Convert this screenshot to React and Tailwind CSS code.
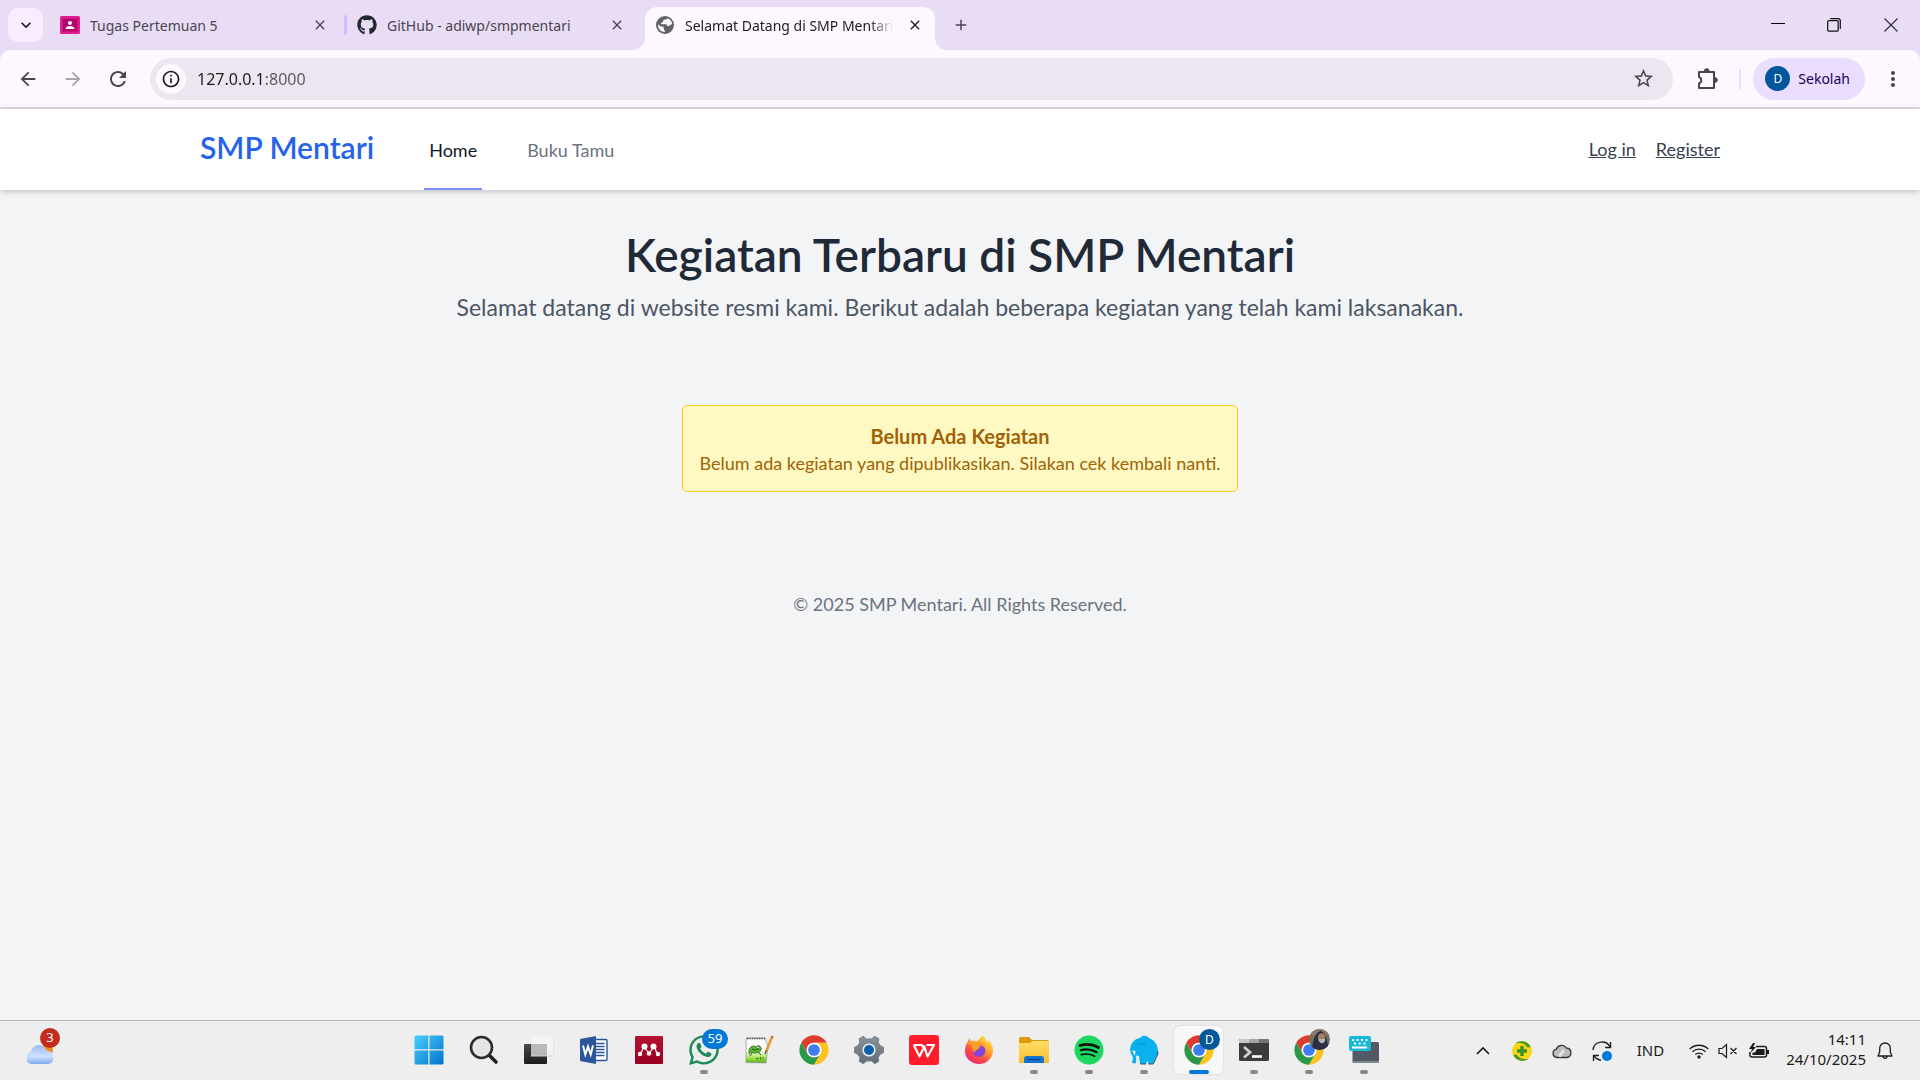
import React from "react";
import { FaGithub, FaWhatsapp } from "react-icons/fa";
import { MdStarBorder, MdRefresh, MdArrowBack, MdArrowForward, MdInfoOutline, MdMoreVert, MdClose, MdAdd, MdKeyboardArrowDown } from "react-icons/md";

function ChromeMark() {
  return (
    <svg viewBox="0 0 48 48" className="size-8">
      <path d="M43.05 13A22 22 0 0 0 4.95 13L14.47 29.5A11 11 0 0 1 24 13Z" fill="#df3c2f" />
      <path d="M43.05 13A22 22 0 0 1 24 46L33.53 29.5A11 11 0 0 0 24 13Z" fill="#fcc31e" />
      <path d="M4.95 13A22 22 0 0 0 24 46L33.53 29.5A11 11 0 0 1 14.47 29.5Z" fill="#2b9847" />
      <circle cx="24" cy="24" r="11" fill="#fff" />
      <circle cx="24" cy="24" r="8.8" fill="#3f7ef0" />
    </svg>
  );
}

function StartMark() {
  return (
    <svg viewBox="0 0 30 30" className="size-[30px]">
      <defs>
        <linearGradient id="win" x1="0" y1="0" x2="1" y2="1">
          <stop offset="0" stopColor="#48d0fb" />
          <stop offset="1" stopColor="#0171d0" />
        </linearGradient>
      </defs>
      <path d="M2 .5h12.3v13.8H.5V2A1.5 1.5 0 0 1 2 .5ZM15.5 .5H28A1.5 1.5 0 0 1 29.5 2v12.3h-14ZM.5 15.5h13.8v14H2A1.5 1.5 0 0 1 .5 28ZM15.5 15.5h14V28a1.5 1.5 0 0 1-1.5 1.5H15.5Z" fill="url(#win)" />
    </svg>
  );
}

function SearchMark() {
  return (
    <svg viewBox="0 0 30 30" className="size-[30px]">
      <path d="M20 20l7 7" stroke="#222" strokeWidth="3.6" strokeLinecap="round" />
      <circle cx="12.5" cy="12.5" r="10.5" fill="#e3e5e7" stroke="#2c2c2c" strokeWidth="2.6" />
    </svg>
  );
}

function TaskViewMark() {
  return (
    <svg viewBox="0 0 30 30" className="size-[30px]">
      <defs>
        <linearGradient id="tv" x1="0" y1="0" x2="0" y2="1">
          <stop offset="0" stopColor="#4a4a48" />
          <stop offset="1" stopColor="#1c1c1c" />
        </linearGradient>
      </defs>
      <rect x="0" y="9" width="23" height="20" rx="1" fill="url(#tv)" />
      <rect x="7" y="1" width="23" height="20" rx="1" fill="#f4f4f4" />
      <rect x="7" y="9" width="16" height="12" fill="#b9b9b9" />
      <path d="M7 21h23V2" fill="none" stroke="#d2d2d2" />
    </svg>
  );
}

function WordMark() {
  return (
    <svg viewBox="0 0 30 30" className="size-[30px]">
      <rect x="12" y="4.5" width="16" height="21" rx="1" fill="#fff" stroke="#2b579a" strokeWidth="1.4" />
      <path d="M17 8.5h8.500M17 11.5h8.500M17 14.5h8.500M17 17.5h8.500M17 20.5h8.500" stroke="#2b579a" strokeWidth="1.3" />
      <path d="M1 4L17 1v28L1 26Z" fill="#2b579a" />
      <path d="M4 10.500l2.300 9L9 11.500l2.700 8 2.300-9" fill="none" stroke="#fff" strokeWidth="2" />
    </svg>
  );
}

function MendeleyMark() {
  return (
    <svg viewBox="0 0 30 30" className="size-[30px]">
      <defs>
        <linearGradient id="md" x1="0" y1="0" x2="0" y2="1">
          <stop offset="0" stopColor="#b51232" />
          <stop offset="1" stopColor="#98001f" />
        </linearGradient>
      </defs>
      <rect x="1" y="1" width="28" height="28" rx="1" fill="url(#md)" />
      <path d="M6 19c1.800-1.500 2.500-3 2.800-6M24 19c-1.800-1.500-2.500-3-2.800-6M11 13l4 5.500 4-5.500" fill="none" stroke="#fff" strokeWidth="1.2" />
      <circle cx="10.5" cy="11.5" r="3" fill="#fff" />
      <circle cx="19.5" cy="11.5" r="3" fill="#fff" />
      <circle cx="15" cy="18.5" r="2.2" fill="#fff" />
      <circle cx="6" cy="19" r="2.2" fill="#fff" />
      <circle cx="24" cy="19" r="2.2" fill="#fff" />
    </svg>
  );
}

function NotepadMark() {
  return (
    <svg viewBox="0 0 30 30" className="size-[30px]">
      <defs>
        <linearGradient id="np" x1="0" y1="0" x2="0" y2="1">
          <stop offset="0.5" stopColor="#fbfbfb" />
          <stop offset="0.8" stopColor="#a5e34a" />
          <stop offset="1" stopColor="#4fae18" />
        </linearGradient>
      </defs>
      <path d="M2 3h19l3 8-2 17-20-.5Z" fill="url(#np)" stroke="#9a9a9a" strokeWidth=".8" />
      <path d="M3 3.500h18" stroke="#444" strokeWidth="1.5" strokeDasharray="1.4 1" />
      <path d="M5 15c1-4 5-5 7-3 3-3 6 0 5 3-1 3-7 4-10 2l-2 2Z" fill="#54b924" stroke="#3d6b2c" strokeWidth=".8" />
      <path d="M8 14l3 1 4-1M8 18l-2 3M14 17l3 3" fill="none" stroke="#2f5a26" />
      <circle cx="14" cy="12.5" r="1.3" fill="#fff" stroke="#222" strokeWidth=".5" />
      <path d="M12 23.500h3M16.500 22v2.500M19 22v2.500" stroke="#31721b" />
      <path d="M28 2L22 17" stroke="#e79a2b" strokeWidth="2.6" />
      <path d="M28.700 1l-1 2" stroke="#d66a5a" strokeWidth="2.6" />
      <path d="M22.300 15.500L21 19" stroke="#555" strokeWidth="1.3" />
    </svg>
  );
}

function SettingsMark() {
  return (
    <svg viewBox="0 0 30 30" className="size-[30px]">
      <defs>
        <linearGradient id="gr" x1="0" y1="0" x2="0" y2="1">
          <stop offset="0" stopColor="#8b949c" />
          <stop offset="1" stopColor="#626b74" />
        </linearGradient>
      </defs>
      <path d="M12.3 4L9.500 1.200 5.200 3.700 5.800 7.500 4 10.500.4 12.500v5L4 19.500l1.800 3L5.200 26.300l4.300 2.500L12.300 26h5.400l2.800 2.800 4.300-2.500-.6-3.800 1.800-3 3.600-2v-5l-3.600-2-1.800-3 .6-3.800-4.300-2.500L17.700 4Z" fill="url(#gr)" stroke="#77808a" strokeLinejoin="round" />
      <circle cx="15" cy="15" r="6.6" fill="#e8eef3" />
      <circle cx="15" cy="15" r="5" fill="#0f5cad" />
    </svg>
  );
}

function WpsMark() {
  return (
    <svg viewBox="0 0 30 30" className="size-[30px]">
      <rect width="30" height="30" rx="3" fill="#ff1c2b" />
      <path d="M4.500 10H13L15.500 15M5 10.500L10.500 21.500 15.300 11.500 18.500 21.500 25 10h-7.500" fill="none" stroke="#fff" strokeWidth="2.2" strokeLinejoin="round" />
    </svg>
  );
}

function FirefoxMark() {
  return (
    <svg viewBox="0 0 30 30" className="size-[30px]">
      <defs>
        <linearGradient id="ff" x1="0.9" y1="0" x2="0.2" y2="1">
          <stop offset="0" stopColor="#fff04a" />
          <stop offset="0.4" stopColor="#ffa22b" />
          <stop offset="0.7" stopColor="#ff4a45" />
          <stop offset="1" stopColor="#e8207f" />
        </linearGradient>
      </defs>
      <path d="M18 .5c3 2 4.500 4.500 5 7 1-.8.8-2 .8-2.800C27 7 29 11 29 15.500 29 23 23 29 15.200 29S1 23.500 1 16c0-4 1-7 3-9.500C4.500 5 5 4 6 3c0 1.500.3 2.500 1 3.200 2-.6 4-.4 5 .3C14 6 16 3.500 18 .5Z" fill="url(#ff)" />
      <circle cx="15" cy="15.5" r="6.4" fill="#8443dd" />
      <path d="M10 9c4-3 11-1 11.500 5-2-3-4-3.500-6-3 1 2-1 3.500-3 4-2 .8-2 2-1 3-3-1-4-5-1.500-9Z" fill="#ff9427" />
      <path d="M4 7.500c3-2 6-1 7.500 1L15 9c-1 3-4 3-5.500 5Z" fill="#ffa12c" />
    </svg>
  );
}

function ExplorerMark() {
  return (
    <svg viewBox="0 0 30 30" className="size-[30px]">
      <defs>
        <linearGradient id="fo" x1="0" y1="0" x2="0" y2="1">
          <stop offset="0" stopColor="#ffdc6b" />
          <stop offset="1" stopColor="#f9bd2b" />
        </linearGradient>
      </defs>
      <path d="M0 3.500A1.500 1.500 0 0 1 1.500 2H10l3 3h15a2 2 0 0 1 2 2v4H0Z" fill="#dd9b0b" />
      <path d="M0 8h11l2.500-2H28a2 2 0 0 1 2 2v20H0Z" fill="url(#fo)" />
      <path d="M5 28v-4a3 3 0 0 1 3-3h14a3 3 0 0 1 3 3v4Z" fill="#1175ce" />
      <path d="M9 24.500h12" stroke="#0a4b93" strokeWidth="1.4" strokeLinecap="round" />
    </svg>
  );
}

function SpotifyMark() {
  return (
    <svg viewBox="0 0 30 30" className="size-[30px]">
      <circle cx="15" cy="15" r="14.5" fill="#1ed760" />
      <path d="M6 10.500c6-1.700 13-1.200 18.500 2" stroke="#111" strokeWidth="2.7" fill="none" strokeLinecap="round" />
      <path d="M6.700 15.300c5-1.400 11-.9 16 1.900" stroke="#111" strokeWidth="2.2" fill="none" strokeLinecap="round" />
      <path d="M7.300 19.600c4.500-1.100 9.500-.6 13.500 1.600" stroke="#111" strokeWidth="1.7" fill="none" strokeLinecap="round" />
    </svg>
  );
}

function ElephantMark() {
  return (
    <svg viewBox="0 0 30 30" className="size-[30px]">
      <path d="M15 .8c3 .2 4 1.500 6 2.700 5 2 8 7 8 13 0 4-1.500 5.500-2.500 7.500-.5 2-1.500 4-2.500 5h-4.500l-1-3.500-1.500 3.500h-6l-1-8-3-.5.3 5.500c.3 3.200-3.800 3.200-4.600.6 1.800-.6 1.300-3 .8-5.600C.3 17 .3 11 4 7 6.500 3.500 10 3.500 11.500 2.500 12.500 1.300 13.500.8 15 .8Z" fill="#0bb0ee" />
      <path d="M29 16.500c0 4-1.500 5.500-2.500 7.500-.5 2-1.500 4-2.500 5h-4.500M17 29h-5.500" fill="none" stroke="#3f4f58" />
      <path d="M8 7.500c3 2.500 6 2 8.500.5" fill="none" stroke="#0795d2" strokeWidth="1.2" />
      <path d="M3.300 15.500l3.200.5c0 2-.3 3.500-1 4.500Z" fill="#f0faff" />
      <path d="M7.500 21l.3 6" fill="none" stroke="#cfe9f5" strokeWidth="1.2" />
    </svg>
  );
}

function TerminalMark() {
  return (
    <svg viewBox="0 0 30 30" className="size-[30px]">
      <rect x="0" y="4" width="30" height="22" rx="1.5" fill="#3c3c3c" />
      <path d="M0 8V5.500A1.500 1.500 0 0 1 1.500 4H10v4Z" fill="#c9c9c9" />
      <path d="M10 4h10v4H10Z" fill="#a4a4a4" />
      <path d="M20 4h8.500A1.500 1.500 0 0 1 30 5.500V8H20Z" fill="#767676" />
      <path d="M5 12l6 5.300L5 22.500" fill="none" stroke="#d0d0d0" strokeWidth="2.8" />
      <path d="M13 21.500h10" stroke="#fff" strokeWidth="2.6" />
    </svg>
  );
}

function KeyboardMark() {
  return (
    <svg viewBox="0 0 30 30" className="size-[30px]">
      <rect x="3.5" y="7" width="26.5" height="21" rx="1.5" fill="#525b65" />
      <path d="M4 27h26" stroke="#8b949c" strokeWidth="1.6" />
      <rect x="0" y="1" width="22" height="15" rx="2" fill="#19b7d8" />
      <path d="M3 5h2M7.500 5h2M12 5h2M16.500 5h2M5 8.500h2M9.700 8.500h2M14.500 8.500h2" stroke="#fff" strokeWidth="2" />
      <path d="M3 12.500h15" stroke="#fff" strokeWidth="2" />
    </svg>
  );
}

const badge = "absolute flex items-center justify-center rounded-full text-white";

const TASKS = [
  { name: "Start", icon: <StartMark /> },
  { name: "Search", icon: <SearchMark /> },
  { name: "Task view", icon: <TaskViewMark /> },
  { name: "Word", icon: <WordMark /> },
  { name: "Mendeley", icon: <MendeleyMark /> },
  {
    name: "WhatsApp",
    icon: <FaWhatsapp className="size-[34px] text-[#1c8b58]" />,
    running: true,
    extra: <span className={`${badge} left-[23px] top-[3px] h-5 w-[26px] bg-[#0078d7] text-[13px]`}>59</span>,
  },
  { name: "Notepad++", icon: <NotepadMark /> },
  { name: "Chrome", icon: <ChromeMark /> },
  { name: "Settings", icon: <SettingsMark /> },
  { name: "WPS Office", icon: <WpsMark /> },
  { name: "Firefox", icon: <FirefoxMark /> },
  { name: "File Explorer", icon: <ExplorerMark />, running: true },
  { name: "Spotify", icon: <SpotifyMark />, running: true },
  { name: "Laragon", icon: <ElephantMark />, running: true },
  {
    name: "Chrome, Sekolah",
    icon: <ChromeMark />,
    active: true,
    extra: <span className={`${badge} left-[25px] top-[3px] size-[21px] bg-[#04579b] text-xs`}>D</span>,
  },
  { name: "Terminal", icon: <TerminalMark />, running: true },
  {
    name: "Chrome, second profile",
    icon: <ChromeMark />,
    running: true,
    extra: (
      <svg viewBox="0 0 20 20" className="absolute left-[25px] top-[3px] size-[21px]">
        <clipPath id="av"><circle cx="10" cy="10" r="10" /></clipPath>
        <g clipPath="url(#av)">
          <rect width="20" height="20" fill="#6b7358" />
          <path d="M0 0h20v6H0Z" fill="#8b7a68" />
          <path d="M3 20C3 12 6 3 11 2c5 1 6 8 8 18Z" fill="#2b2d45" />
          <ellipse cx="12" cy="8" rx="3.4" ry="4" fill="#a97f68" />
          <path d="M9 9.500h6.500c0 3-1.500 4-3.200 4S9 12 9 9.500Z" fill="#aeb4b8" />
        </g>
      </svg>
    ),
  },
  { name: "Touch keyboard", icon: <KeyboardMark />, running: true },
];

function TaskButton({ task }) {
  return (
    <button
      type="button"
      aria-label={task.name}
      className={`relative mx-[3px] mb-1.5 mt-[5px] flex w-[49px] items-center justify-center rounded-md ${task.active ? "bg-[#f8f8f8] shadow-[0_0_1px_1px_#e2e2e2]" : ""}`}
    >
      {task.icon}
      {task.extra}
      {task.active && <span className="absolute bottom-0 h-1 w-5 rounded-full bg-[#0078d7]" />}
      {task.running && <span className="absolute bottom-0 h-1 w-2 rounded-full bg-[#868686]" />}
    </button>
  );
}

function TabStrip() {
  return (
    <div className="flex h-[50px] bg-[#e9ddf5] text-[14px] text-[#49454f]">
      <button type="button" aria-label="Search tabs" className="ml-2 mt-2 flex h-[34px] w-[35px] items-center justify-center rounded-[10px] bg-[#f7edff] text-[#1d1b20]">
        <MdKeyboardArrowDown className="size-5" />
      </button>
      <div className="flex w-[301px] items-center pl-[17px]">
        <svg viewBox="0 0 20 18" className="h-[18px] w-5 shrink-0">
          <rect width="20" height="18" rx="1.5" fill="#e01e8c" />
          <rect x="2.5" y="2.5" width="15" height="13" fill="#b5066f" />
          <circle cx="10" cy="7" r="2" fill="#fff" />
          <path d="M5.500 13c0-2 2-3 4.500-3s4.500 1 4.500 3Z" fill="#fff" />
        </svg>
        <button type="button" className="ml-2.5 flex-1 truncate text-left">Tugas Pertemuan 5</button>
        <button type="button" aria-label="Close tab" className="mr-3.5 p-0.5"><MdClose className="size-4" /></button>
      </div>
      <div className="flex w-[301px] items-center">
        <span className="h-5 w-[3px] rounded-full bg-[#d3bcfd]" />
        <FaGithub className="ml-2.5 size-5 shrink-0 text-[#24292f]" />
        <button type="button" className="ml-2.5 flex-1 truncate text-left">GitHub - adiwp/smpmentari</button>
        <button type="button" aria-label="Close tab" className="mr-[18px] p-0.5"><MdClose className="size-4" /></button>
      </div>
      <div className="relative mt-[7px] flex w-[290px] items-center rounded-t-[12px] bg-[#fdf7ff] pb-[7px] text-[#1d1b20]">
        <span className="absolute -left-3 bottom-0 size-3 bg-[radial-gradient(circle_at_0_0,#e9ddf5_12px,#fdf7ff_12px)]" />
        <span className="absolute -right-3 bottom-0 size-3 bg-[radial-gradient(circle_at_100%_0,#e9ddf5_12px,#fdf7ff_12px)]" />
        <svg viewBox="0 0 18 18" className="ml-[11px] size-[18px] shrink-0">
          <circle cx="9" cy="9" r="9" fill="#5f6368" />
          <path d="M11.500 2.200c-.5 1-1.500 1.300-2.500 1.300-1.500 0-1.800.8-1.800 1.800 0 1-1 1.200-1.800 1.200-.6 0-.4 1.500.2 1.700h4.200c.9 0 1.400.9 1.400 1.900h1.600c1 0 1.400-.8 2-1.500.4-.5 1-.5 1.400-.4A7 7 0 0 0 11.500 2.200ZM2 8.200c1.500 1.500 2.500 2.300 4 2.300 1.800 0 2.200 1.200 1.700 2.200-.3.600.6 1.200 1 1.800.3.500.2 1 .2 1.600A7 7 0 0 1 2 8.200Z" fill="#fdf7ff" />
        </svg>
        <button type="button" className="ml-[11px] w-[209px] overflow-hidden whitespace-nowrap text-left [mask-image:linear-gradient(90deg,#000_88%,transparent)]">
          Selamat Datang di SMP Mentari
        </button>
        <button type="button" aria-label="Close tab" className="ml-auto mr-2.5 p-0.5"><MdClose className="size-4" /></button>
      </div>
      <button type="button" aria-label="New tab" className="ml-[15px] px-0.5"><MdAdd className="size-[18px]" /></button>
      <div className="ml-auto flex text-black">
        <button type="button" aria-label="Minimise" className="flex w-[57px] items-center justify-center">
          <svg viewBox="0 0 14 14" className="size-3.5"><path d="M0 5.500h14" stroke="#000" /></svg>
        </button>
        <button type="button" aria-label="Restore" className="flex w-[56px] items-center justify-center">
          <svg viewBox="0 0 14 14" className="size-3.5" fill="none" stroke="#111" strokeWidth="1.2">
            <rect x=".7" y="2.7" width="10.5" height="10.5" rx="1" />
            <path d="M3 .7h8a2.300 2.300 0 0 1 2.300 2.300v8" />
          </svg>
        </button>
        <button type="button" aria-label="Close" className="flex w-[58px] items-center justify-center">
          <svg viewBox="0 0 14 14" className="size-3.5"><path d="M.5 .5l13 13M13.500 .5l-13 13" stroke="#333" strokeWidth="1.2" /></svg>
        </button>
      </div>
    </div>
  );
}

function Toolbar() {
  return (
    <div className="bg-[#e9ddf5]">
      <div className="flex h-[59px] items-center rounded-t-[10px] border-b-2 border-[#e5dfe9] bg-[#fdf7ff] text-[#49454f]">
        <button type="button" aria-label="Back" className="ml-[17px]"><MdArrowBack className="size-[22px]" /></button>
        <button type="button" aria-label="Forward" className="ml-[23px] text-[#aaa5ae]"><MdArrowForward className="size-[22px]" /></button>
        <button type="button" aria-label="Reload" className="ml-[22px]"><MdRefresh className="size-6" /></button>
        <div className="ml-5 flex h-[42px] flex-1 items-center rounded-full bg-[#ece6f0] pl-1.5">
          <button type="button" aria-label="Site information" className="flex size-[30px] items-center justify-center rounded-full bg-[#fdf7ff] text-[#1d1b20]">
            <MdInfoOutline className="size-5" />
          </button>
          <input
            aria-label="Address"
            defaultValue="127.0.0.1:8000"
            className="ml-[11px] min-w-0 flex-1 bg-[linear-gradient(90deg,#1d1b20_65px,#5a5560_65px)] bg-clip-text text-[16px] text-transparent outline-none"
          />
          <button type="button" aria-label="Bookmark" className="mr-[18px]"><MdStarBorder className="size-[23px]" /></button>
        </div>
        <button type="button" aria-label="Extensions" className="ml-[22px]">
          <svg viewBox="0 0 24 24" className="size-6" fill="none" stroke="currentColor" strokeWidth="2" strokeLinejoin="round">
            <path d="M4 5h15v16H4v-4.500c3-1 3-5.500 0-6.500Z" />
            <path d="M10 4a1.700 1.700 0 0 1 3.400 0ZM20 11.300a1.700 1.700 0 0 1 0 3.400Z" fill="currentColor" />
          </svg>
        </button>
        <span className="ml-5 h-5 w-0.5 bg-[#eaddff]" />
        <button type="button" className="ml-3 flex h-[42px] items-center gap-2 rounded-full bg-[#eaddff] pl-3 pr-[15px] text-[14px] text-[#21005d]">
          <span className="flex size-[25px] items-center justify-center rounded-full bg-[#01579b] text-xs text-white">D</span>
          Sekolah
        </button>
        <button type="button" aria-label="Menu" className="ml-4 mr-[15px]"><MdMoreVert className="size-6" /></button>
      </div>
    </div>
  );
}

function SiteNav() {
  return (
    <nav className="relative bg-white shadow-[0_1px_6px_rgba(0,0,0,0.25)]">
      <div className="mx-auto flex h-[81px] max-w-[1600px] px-10">
        <a href="#home" className="flex items-center pb-1 text-[30px] font-semibold text-[#2563eb]">SMP Mentari</a>
        <a href="#home" className="ml-[50px] flex items-center border-b-2 border-[#818cf8] px-[5px] pt-1 text-[18px] text-[#111827]">Home</a>
        <a href="#buku-tamu" className="ml-10 flex items-center border-b-2 border-transparent px-[5px] pt-1 text-[18px] text-[#6b7280]">Buku Tamu</a>
        <div className="ml-auto flex items-center gap-5 text-[18px] text-[#374151] underline">
          <a href="#login">Log in</a>
          <a href="#register">Register</a>
        </div>
      </div>
    </nav>
  );
}

function Tray() {
  return (
    <div className="ml-auto flex items-center text-[#1b1b1b]">
      <button type="button" aria-label="Show hidden icons" className="mr-[22px]">
        <svg viewBox="0 0 14 10" className="h-2.5 w-3.5" fill="none" stroke="currentColor" strokeWidth="1.6"><path d="M1 8l6-6 6 6" /></svg>
      </button>
      <svg viewBox="0 0 20 20" className="mr-5 size-5">
        <circle cx="10" cy="10" r="10" fill="#fbd414" />
        <path d="M3 2.500C8-1.500 16 0 18.500 6l-3 .5C13 2 8 1 3 2.500ZM17 17.500c-5 4-13 2.500-15.500-3.500l3-.5C7 18 12 19 17 17.500Z" fill="#3a9a2c" />
        <path d="M10 5v10M5 10h10" stroke="#34942c" strokeWidth="3.4" />
      </svg>
      <svg viewBox="0 0 20 16" className="mr-5 h-4 w-5">
        <path d="M5 14.500a4.200 4.200 0 0 1-.6-8.300A5.600 5.600 0 0 1 14.500 5a4.800 4.800 0 0 1 .5 9.500Z" fill="#b9bbbd" stroke="#333" strokeWidth="1.3" />
        <path d="M7 13.500l5-6.500" stroke="#e4e4e4" strokeWidth="3" />
      </svg>
      <svg viewBox="0 0 20 20" className="mr-[25px] size-5" fill="none" stroke="#222" strokeWidth="1.4">
        <path d="M1 9A9 9 0 0 1 18 6M18.500 1v5.500H13M1.500 20v-5.500H7M2 15c2 2.500 4 4 7 4.200" />
        <circle cx="15" cy="15" r="5" fill="#0078d7" stroke="none" />
      </svg>
      <span className="mr-[25px] text-[15px]">IND</span>
      <svg viewBox="0 0 20 16" className="mr-[9px] h-4 w-5" fill="none" stroke="currentColor" strokeWidth="1.4">
        <path d="M.7 6a13.300 13.300 0 0 1 18.600 0M3.500 8.800a9.300 9.300 0 0 1 13 0M6.300 11.600a5.300 5.300 0 0 1 7.400 0" />
        <circle cx="10" cy="14" r="1.7" fill="currentColor" stroke="none" />
      </svg>
      <svg viewBox="0 0 20 16" className="mr-[11px] h-4 w-5" fill="none" stroke="currentColor" strokeWidth="1.2">
        <path d="M1 5.500h3L8.500 1.500v13L4 10.500H1ZM12.500 5l6 6M18.500 5l-6 6" />
      </svg>
      <svg viewBox="0 0 20 16" className="h-4 w-5" fill="none" stroke="currentColor" strokeWidth="1.5">
        <path d="M7 3.500h8.500a2 2 0 0 1 2 2v6.500a2 2 0 0 1-2 2H3a2 2 0 0 1-2-2V9" />
        <path d="M8 6h7.500v6H3.500V9.500H6ZM18 7h2v4h-2ZM4 0L0 6h3L1.500 10 7 4H4.200L6 0Z" fill="currentColor" stroke="none" />
      </svg>
      <div className="ml-[17px] pb-1 text-right text-[15px] leading-5">
        <div>14:11</div>
        <div>24/10/2025</div>
      </div>
      <button type="button" aria-label="Notifications" className="ml-[11px] mr-[27px]">
        <svg viewBox="0 0 16 18" className="h-[18px] w-4" fill="none" stroke="currentColor" strokeWidth="1.3" strokeLinejoin="round">
          <path d="M8 1a5.300 5.300 0 0 0-5.300 5.300V10L1 14h14l-1.700-4V6.300A5.300 5.300 0 0 0 8 1ZM6 14.300a2 2 0 0 0 4 0" />
        </svg>
      </button>
    </div>
  );
}

export default function App() {
  return (
    <div className="flex min-h-screen flex-col bg-[#f3f4f6] font-['Noto_Sans',sans-serif]">
      <header>
        <TabStrip />
        <Toolbar />
      </header>
      <div className="flex-1 font-['Lato',sans-serif]">
        <SiteNav />
        <main className="px-10 pt-10 text-center">
          <h1 className="text-[46px] font-semibold leading-[50px] text-[#1f2937]">Kegiatan Terbaru di SMP Mentari</h1>
          <p className="mt-2.5 text-[23px] leading-[35px] text-[#4b5563]">
            Selamat datang di website resmi kami. Berikut adalah beberapa kegiatan yang telah kami laksanakan.
          </p>
          <div role="alert" className="mx-auto mt-20 w-fit rounded-[5px] border border-[#facc15] bg-[#fef9c3] px-[17px] py-[15px] text-[#a16207]">
            <strong className="block text-[20px] font-bold leading-[30px]">Belum Ada Kegiatan</strong>
            <span className="block text-[18px] leading-[25px]">Belum ada kegiatan yang dipublikasikan. Silakan cek kembali nanti.</span>
          </div>
        </main>
        <footer className="mt-[100px] text-center text-[18px] leading-[25px] text-[#6b7280]">© 2025 SMP Mentari. All Rights Reserved.</footer>
      </div>
      <div className="flex h-[60px] border-t border-[#b9b9bb] bg-[#eeeeee]">
        <button type="button" aria-label="Weather" className="relative ml-[25px] w-[38px]">
          <svg viewBox="0 0 30 20" className="mt-1.5 h-5 w-[30px]">
            <defs>
              <linearGradient id="cl" x1="0" y1="0" x2="0" y2="1">
                <stop offset="0" stopColor="#98bcf8" />
                <stop offset="0.6" stopColor="#cfe1ff" />
                <stop offset="1" stopColor="#7fa9ee" />
              </linearGradient>
            </defs>
            <circle cx="22" cy="6" r="6" fill="#f28c1c" />
            <path d="M6 20a6 6 0 0 1-.5-11.500C7 3 11 .8 14.500 1c4 .3 6 3 7 5.500A7 7 0 0 1 24 20Z" fill="url(#cl)" />
          </svg>
          <span className={`${badge} left-[15px] top-[7px] size-5 bg-[#c42b1c] text-[13px]`}>3</span>
        </button>
        <div className="ml-[338px] flex">
          {TASKS.map((task) => (
            <TaskButton key={task.name} task={task} />
          ))}
        </div>
        <Tray />
      </div>
    </div>
  );
}
